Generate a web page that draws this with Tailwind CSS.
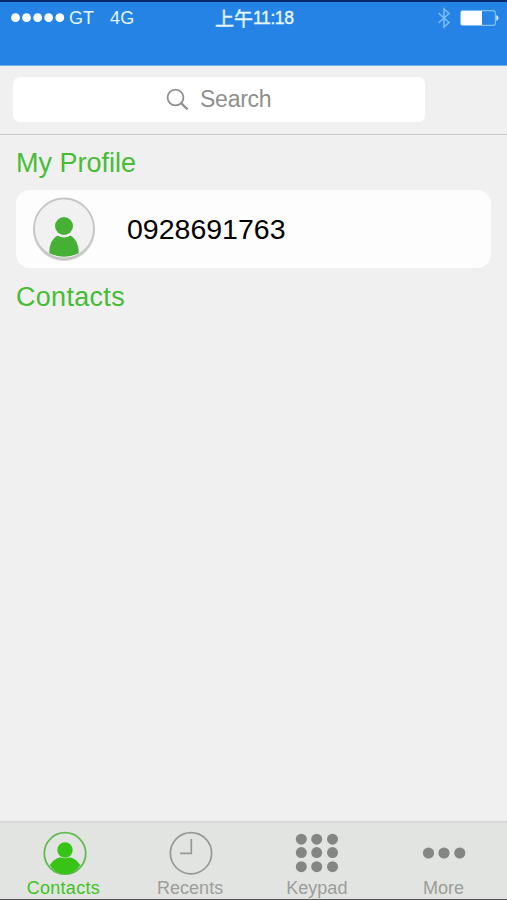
<!DOCTYPE html>
<html lang="en">
<head>
    <meta charset="UTF-8">
    <meta name="viewport" content="width=device-width, initial-scale=1.0">
    <title>Contacts</title>
    <script src="https://cdn.jsdelivr.net/npm/@tailwindcss/browser@4"></script>
</head>
<body class="bg-[#f0f0f0] font-['Liberation_Sans','Noto_Sans_CJK_TC',sans-serif]">
    <div class="w-[507px] h-[900px] flex flex-col overflow-hidden">
        <!-- Status bar -->
        <header class="h-[66px] shrink-0 bg-[#2583e6] border-t-2 border-t-[#092a66] border-b border-b-[#73b1e4]">
            <div class="h-8 grid grid-cols-[215px_1fr_auto] items-center text-[#e3f5ff] text-[18px] leading-none">
                <div class="flex items-center pl-[11px]">
                    <svg class="w-[54px] h-[10px]" viewBox="0 0 54 10" fill="#fff">
                        <circle cx="4.5" cy="4.7" r="4.4" />
                        <circle cx="15.5" cy="4.7" r="4.4" />
                        <circle cx="26.7" cy="4.7" r="4.4" />
                        <circle cx="37.7" cy="4.7" r="4.4" />
                        <circle cx="48.8" cy="4.7" r="4.4" />
                    </svg>
                    <span class="ml-[4px]">GT</span>
                    <span class="ml-[16px] tracking-[0.3px]">4G</span>
                </div>
                <div class="flex items-center pt-[2px] whitespace-nowrap [-webkit-text-stroke:0.4px_#e3f5ff]">
                    <span class="text-[19px]">上午</span>
                    <span class="text-[17.5px] tracking-[-0.4px]">11:18</span>
                </div>
                <div class="flex items-center pr-[7px]">
                    <svg class="w-[14px] h-[22px]" viewBox="0 0 14 22" fill="none" stroke="#7cbdf8" stroke-width="1.5">
                        <path d="M1.5 6 L12 15.5 L7 20 V2 L12 6.5 L1.5 16" />
                    </svg>
                    <svg class="w-[40px] h-[18px] ml-[9px]" viewBox="0 0 40 18">
                        <rect x="0.6" y="1.6" width="34.8" height="14.8" rx="2.5" fill="none" stroke="#7cc0f6" stroke-width="1.2" />
                        <path d="M2 2 H22 V16 H2 Q1 16 1 15 V3 Q1 2 2 2 Z" fill="#fff" />
                        <path d="M36.3 6 Q38.5 7 38.5 9 Q38.5 11 36.3 12 Z" fill="#d5efff" />
                    </svg>
                </div>
            </div>
        </header>

        <!-- Search -->
        <div class="h-[69px] shrink-0 border-b border-[#c6c6c6] pt-[11px] pl-[13px]">
            <div class="w-[412px] h-[45px] bg-white rounded-[7px] flex items-center pl-[153px] text-[#8f8f8f]">
                <svg class="w-[23px] h-[23px]" viewBox="0 0 23 23" fill="none" stroke="currentColor">
                    <circle cx="9.5" cy="9.5" r="7.9" stroke-width="1.8" />
                    <path d="M15.1 15.2 L21.5 21.3" stroke-width="2.3" />
                </svg>
                <span class="ml-[11px] text-[23px] leading-none tracking-[-0.25px]">Search</span>
            </div>
        </div>

        <main class="flex-1 px-4">
            <h2 class="h-[55px] flex items-center pt-[2px] text-[27px] leading-none text-[#46bd35]">My Profile</h2>
            <div class="w-[475px] h-[78px] bg-[#fdfdfd] rounded-[14px] flex items-center">
                <svg class="w-[70px] h-[70px] ml-[13px]" viewBox="0 0 70 70">
                    <circle cx="35" cy="36" r="31" fill="#d9d9d9" />
                    <circle cx="35" cy="35.3" r="30.5" fill="#b5b5b5" />
                    <circle cx="35" cy="34.5" r="30" fill="#f0f1f0" stroke="#c7c7c7" stroke-width="1.8" />
                    <circle cx="35" cy="32" r="9" fill="#46b035" />
                    <path d="M28.5 41.6 Q35 45.5 41.5 41.6 Q49.6 46 49.8 59 Q43 62.7 35 62.7 Q27 62.7 20.2 59 Q20.4 46 28.5 41.6 Z" fill="#46b035" />
                </svg>
                <span class="ml-[28px] text-[28.5px] leading-none text-black">0928691763</span>
            </div>
            <h2 class="h-[58px] flex items-center text-[27px] leading-none tracking-[0.3px] text-[#46bd35]">Contacts</h2>
        </main>

        <!-- Tab bar -->
        <nav class="h-[79px] shrink-0 bg-[#e2e4e1] border-t-2 border-t-[#d7d8d6] border-b border-b-[#555] grid grid-cols-4 text-[18px] leading-none text-[#9b9d9b]">
            <div class="flex flex-col items-center pt-[8px] text-[#40c326]">
                <svg class="w-[44px] h-[44px] ml-[3px]" viewBox="0 0 44 44">
                    <circle cx="22" cy="22.4" r="20.7" fill="none" stroke="#62ba50" stroke-width="1.8" />
                    <circle cx="22" cy="19" r="7.7" fill="#37c417" />
                    <path d="M17 26.3 Q22 28 27 26.3 Q33.5 28 37.3 34.3 Q31.5 43 22 43 Q12.5 43 6.7 34.3 Q10.5 28 17 26.3 Z" fill="#37c417" />
                </svg>
                <span class="mt-[4px] tracking-[0.25px]">Contacts</span>
            </div>
            <div class="flex flex-col items-center pt-[8px]">
                <svg class="w-[44px] h-[44px] ml-px" viewBox="0 0 44 44" fill="none" stroke="#969896" stroke-width="1.7">
                    <circle cx="22" cy="22.2" r="20.6" />
                    <path d="M22.3 8 V22.3 H11" />
                </svg>
                <span class="mt-[4px]">Recents</span>
            </div>
            <div class="flex flex-col items-center pt-[8px]">
                <svg class="w-[44px] h-[44px]" viewBox="0 0 44 44" fill="#848684">
                    <circle cx="6.3" cy="8.2" r="5.5" />
                    <circle cx="21.7" cy="8.2" r="5.5" />
                    <circle cx="37.5" cy="8.2" r="5.5" />
                    <circle cx="6.3" cy="21.6" r="5.5" />
                    <circle cx="21.7" cy="21.6" r="5.5" />
                    <circle cx="37.5" cy="21.6" r="5.5" />
                    <circle cx="6.3" cy="35.7" r="5.5" />
                    <circle cx="21.7" cy="35.7" r="5.5" />
                    <circle cx="37.5" cy="35.7" r="5.5" />
                </svg>
                <span class="mt-[4px]">Keypad</span>
            </div>
            <div class="flex flex-col items-center pt-[8px]">
                <svg class="w-[44px] h-[44px]" viewBox="0 0 44 44" fill="#848684">
                    <circle cx="6.5" cy="22" r="5.6" />
                    <circle cx="22" cy="22" r="5.6" />
                    <circle cx="37.8" cy="22" r="5.6" />
                </svg>
                <span class="mt-[4px]">More</span>
            </div>
        </nav>
    </div>
</body>
</html>
